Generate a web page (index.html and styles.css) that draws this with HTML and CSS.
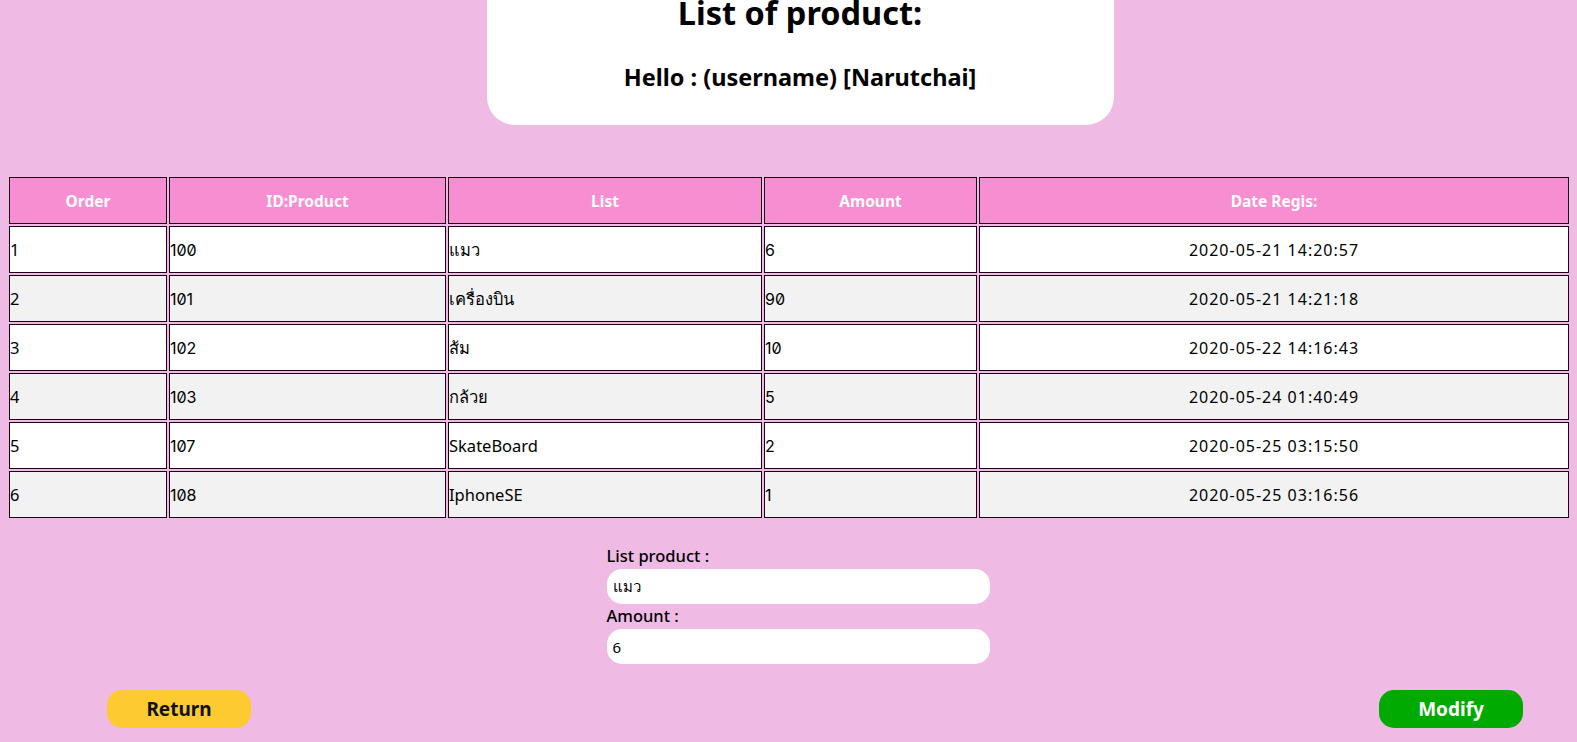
FILE: index.html
```html
<!DOCTYPE html>
<html lang="en">
<head>
<meta charset="utf-8">
<title>List of product</title>
<link rel="stylesheet" href="styles.css">
</head>
<body>
<div class="top">
  <header class="hero">
    <h1 class="hero-title">List of product:</h1>
    <h2 class="hero-hello">Hello : (username) [Narutchai]</h2>
  </header>
</div>

<table class="grid">
  <colgroup>
    <col class="c-order"><col class="c-id"><col class="c-list"><col class="c-amount"><col class="c-date">
  </colgroup>
  <thead>
    <tr><th>Order</th><th>ID:Product</th><th>List</th><th>Amount</th><th>Date Regis:</th></tr>
  </thead>
  <tbody>
    <tr><td>1</td><td class="num">100</td><td>แมว</td><td class="num">6</td><td class="date">2020-05-21 14:20:57</td></tr>
    <tr><td>2</td><td class="num">101</td><td>เครื่องบิน</td><td class="num">90</td><td class="date">2020-05-21 14:21:18</td></tr>
    <tr><td>3</td><td class="num">102</td><td>ส้ม</td><td class="num">10</td><td class="date">2020-05-22 14:16:43</td></tr>
    <tr><td>4</td><td class="num">103</td><td>กล้วย</td><td class="num">5</td><td class="date">2020-05-24 01:40:49</td></tr>
    <tr><td>5</td><td class="num">107</td><td>SkateBoard</td><td class="num">2</td><td class="date">2020-05-25 03:15:50</td></tr>
    <tr><td>6</td><td class="num">108</td><td>IphoneSE</td><td class="num">1</td><td class="date">2020-05-25 03:16:56</td></tr>
  </tbody>
</table>

<div class="form-wrap">
  <form class="edit-form">
    <label class="field-label" for="list">List product :</label>
    <input class="field" id="list" type="text" value="แมว">
    <label class="field-label" for="amount">Amount :</label>
    <input class="field" id="amount" type="text" value="6">
  </form>
</div>

<div class="actions">
  <button class="btn btn-return" type="button">Return</button>
  <button class="btn btn-modify" type="button">Modify</button>
</div>
</body>
</html>
```
FILE: styles.css
```css
html, body {
  background: #efbbe5;
}
body {
  margin: 0 6px 0 7px;
  font-family: "Noto Sans", "Liberation Sans", sans-serif;
  color: #000;
}

.top {
  display: flex;
  justify-content: center;
  padding-left: 22px;
}
.hero {
  width: 627px;
  height: 125px;
  background: #fff;
  border-radius: 0 0 28px 28px;
  text-align: center;
  box-sizing: border-box;
}
.hero-title {
  margin: -4px 0 0;
  font-size: 32.5px;
  font-weight: 700;
  line-height: 34px;
}
.hero-hello {
  margin: 33px 0 0;
  font-size: 23.5px;
  font-weight: 700;
  line-height: 28px;
}

.grid {
  width: 100%;
  margin-top: 50px;
  border-collapse: separate;
  border-spacing: 2px;
  table-layout: fixed;
  font-size: 16.5px;
}
.c-order { width: 158px; }
.c-id { width: 277px; }
.c-list { width: 314px; }
.c-amount { width: 213px; }

.grid th, .grid td {
  height: 45px;
  border: 1px solid #1c0018;
  padding: 0;
  white-space: nowrap;
}
.grid th {
  background: #f78ed1;
  color: #fff;
  font-weight: 700;
  font-size: 15.5px;
  text-align: center;
}
.grid td {
  background: #fff;
  text-align: left;
}
.grid tbody tr:nth-child(even) td {
  background: #f2f2f2;
}
.grid td.date {
  text-align: center;
  font-size: 16px;
  letter-spacing: 1px;
}
.grid td.num {
  font-family: "Inter", "Noto Sans", sans-serif;
  font-feature-settings: "zero" 1;
  font-size: 16px;
}

.form-wrap {
  display: flex;
  justify-content: center;
  padding-left: 18px;
  margin-top: 26px;
}
.edit-form {
  width: 383px;
  display: flex;
  flex-direction: column;
}
.field-label {
  font-size: 16.5px;
  font-weight: 500;
  line-height: 20px;
  margin-bottom: 3px;
}
.field {
  height: 35px;
  border: none;
  border-radius: 15px;
  background: #fff;
  padding: 0 6px;
  font-family: "Noto Sans", sans-serif;
  font-size: 15px;
  margin-bottom: 2px;
  outline: none;
  box-sizing: border-box;
}

.actions {
  display: flex;
  justify-content: space-between;
  padding: 24px 48px 0 100px;
}
.btn {
  width: 144px;
  height: 38px;
  border: none;
  border-radius: 15px;
  font-family: "Noto Sans", sans-serif;
  font-size: 19px;
  font-weight: 700;
  cursor: pointer;
}
.btn-return {
  background: #fdca32;
  color: #111;
}
.btn-modify {
  background: #00aa00;
  color: #fff;
}
```
